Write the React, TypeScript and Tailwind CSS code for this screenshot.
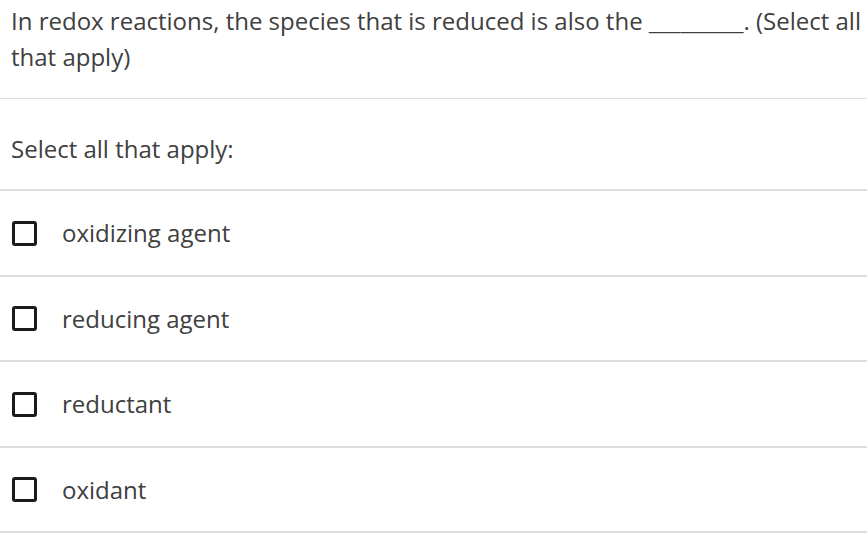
const options = ['oxidizing agent', 'reducing agent', 'reductant', 'oxidant']

function Checkbox() {
  return <span className="box-border h-[25px] w-[25px] shrink-0 rounded-[3px] border-[3px] border-[#1a1a1a] bg-white" />
}

export default function App() {
  return (
    <div className="min-h-screen bg-white text-[#404040] font-['Open_Sans',sans-serif]">
      <div className="h-[99px] border-b border-[#dcdcdc] pl-[11px] pr-[2px] pt-[3px] text-[24px] leading-[36px]">
        In redox reactions, the species that is reduced is also the _________. (Select all that apply)
      </div>
      <div className="flex h-[92px] items-center border-b-2 border-[#dcdcdc] px-[11px] pt-[10px] text-[24px]">
        Select all that apply:
      </div>
      {options.map((o) => (
        <label key={o} className="flex h-[85.5px] cursor-pointer items-center gap-[25px] border-b-2 border-[#dcdcdc] px-[12px] pt-[1px] text-[24px]">
          <Checkbox />
          <span>{o}</span>
        </label>
      ))}
    </div>
  )
}
